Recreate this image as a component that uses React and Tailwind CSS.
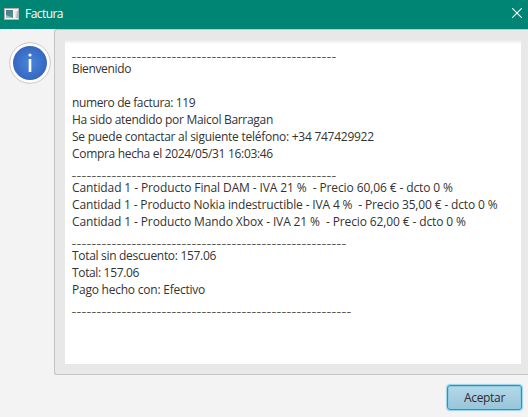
const lines = [
  { rule: 53 },
  { text: 'Bienvenido', track: 'tracking-[-0.35px]' },
  { text: '' },
  { text: 'numero de factura: 119', track: 'tracking-[-0.38px]' },
  { text: 'Ha sido atendido por Maicol Barragan', track: 'tracking-[-0.3px]' },
  { text: 'Se puede contactar al siguiente teléfono: +34 747429922', track: 'tracking-[-0.26px]' },
  { text: 'Compra hecha el 2024/05/31 16:03:46', track: 'tracking-[-0.32px]' },
  { rule: 53 },
  { text: 'Cantidad 1 - Producto Final DAM - IVA 21 %  - Precio 60,06 € - dcto 0 %', track: 'tracking-[-0.11px]' },
  { text: 'Cantidad 1 - Producto Nokia indestructible - IVA 4 %  - Precio 35,00 € - dcto 0 %', track: 'tracking-[-0.15px]' },
  { text: 'Cantidad 1 - Producto Mando Xbox - IVA 21 %  - Precio 62,00 € - dcto 0 %', track: 'tracking-[-0.12px]' },
  { rule: 55 },
  { text: 'Total sin descuento: 157.06', track: 'tracking-[-0.31px]' },
  { text: 'Total: 157.06', track: 'tracking-[-0.35px]' },
  { text: 'Pago hecho con: Efectivo', track: 'tracking-[-0.23px]' },
  { rule: 56 },
];

function Line({ rule, text, track }) {
  if (rule) {
    return <div className="h-[17px] pt-px text-[9px] leading-[17px] font-bold tracking-[1.3px] text-black">{'_'.repeat(rule)}</div>;
  }
  return <div className={`h-[17px] text-[12px] leading-[17px] ${track || ''}`}>{text}</div>;
}

function WindowIcon() {
  return (
    <svg width="15" height="12" viewBox="0 0 15 12" className="mt-[-2px] shrink-0">
      <defs>
        <linearGradient id="pane" x1="0" y1="0" x2="1" y2="1">
          <stop offset="0" stopColor="#4a78a8" />
          <stop offset="1" stopColor="#4f9a70" />
        </linearGradient>
      </defs>
      <rect width="15" height="12" fill="#b9aeb0" />
      <rect x="1" y="1" width="13" height="10" fill="#f4f4f4" />
      <rect x="2" y="2" width="7" height="8" fill="url(#pane)" />
      <path d="M2 10V7L9 10Z" fill="#9cc3c8" />
      <rect x="11" y="3" width="3" height="7" fill="#dce8ee" />
      <path d="M13 3H14V10H12Z" fill="#9dc4cf" />
    </svg>
  );
}

function InfoIcon() {
  return (
    <svg width="42" height="42" viewBox="0 0 42 42">
      <defs>
        <radialGradient id="info">
          <stop offset="0" stopColor="#4787db" />
          <stop offset="1" stopColor="#3766c0" />
        </radialGradient>
      </defs>
      <circle cx="21" cy="21" r="20.3" fill="#fff" stroke="#c9c9c9" />
      <circle cx="21" cy="21" r="17" fill="url(#info)" />
      <circle cx="21" cy="13" r="1.6" fill="#fff" />
      <rect x="19.7" y="17" width="2.6" height="13" fill="#fff" />
    </svg>
  );
}

export default function App() {
  return (
    <div className="flex h-[417px] w-[528px] flex-col overflow-hidden bg-[#f3f3f3] font-['Open_Sans','Noto_Sans',sans-serif] text-[#333]">
      <header className="flex h-[29px] shrink-0 items-center bg-[#008575] pl-1 text-white">
        <WindowIcon />
        <span className="mt-[-2px] ml-[6px] text-[12px] leading-[17px] tracking-[-0.55px]">Factura</span>
        <svg width="10" height="10" viewBox="0 0 10 10" className="mt-[-3px] mr-[6px] ml-auto">
          <path d="M.3 .3 9.7 9.7M9.7 .3 .3 9.7" stroke="#fff" strokeWidth="1.1" />
        </svg>
      </header>
      <main className="flex h-[346px] shrink-0">
        <div className="w-[54px] shrink-0 pt-[13px] pl-[9px]">
          <InfoIcon />
        </div>
        <section className="h-[346px] w-[474px] rounded-l-[3px] border border-r-0 border-[#c4c4c4] bg-[#e8e8e8] pt-[10px] pl-[10px]">
          <div className="h-[324px] w-[456px] bg-white bg-linear-to-b from-[#e9e9e9] to-white to-[4px] pt-[3px] pl-[7px] whitespace-pre">
            {lines.map((line, i) => (
              <Line key={i} {...line} />
            ))}
          </div>
        </section>
      </main>
      <footer className="flex justify-end pt-[10px] pr-[6px]">
        <button className="h-[25px] w-[75px] rounded-[3px] border border-[#149bce] bg-linear-to-b from-[#b3d9ea] to-[#9bc4d8] text-[12px] leading-[24px] tracking-[-0.3px] text-[#2b2b38] shadow-[0_0_1px_1px_#9ad3e8,inset_0_0_0_1px_#8dcbe4]">
          Aceptar
        </button>
      </footer>
    </div>
  );
}
